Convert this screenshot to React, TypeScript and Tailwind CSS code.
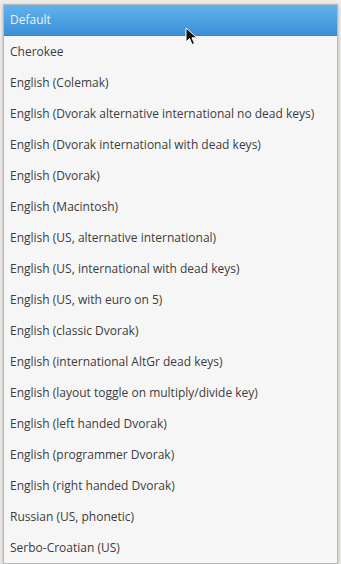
const LAYOUTS = [
  "Default",
  "Cherokee",
  "English (Colemak)",
  "English (Dvorak alternative international no dead keys)",
  "English (Dvorak international with dead keys)",
  "English (Dvorak)",
  "English (Macintosh)",
  "English (US, alternative international)",
  "English (US, international with dead keys)",
  "English (US, with euro on 5)",
  "English (classic Dvorak)",
  "English (international AltGr dead keys)",
  "English (layout toggle on multiply/divide key)",
  "English (left handed Dvorak)",
  "English (programmer Dvorak)",
  "English (right handed Dvorak)",
  "Russian (US, phonetic)",
  "Serbo-Croatian (US)",
];

function Cursor() {
  return (
    <svg width="14" height="20" viewBox="0 0 14 20" className="absolute left-[185px] top-[27px]">
      <path d="M1 1 L1 15 L4.5 11.5 L7 17.5 L9.5 16.5 L7 10.8 L12 10.8 Z" fill="#111" stroke="#fff" strokeWidth="1" strokeLinejoin="round" />
    </svg>
  );
}

export default function App() {
  return (
    <div className="relative w-[341px] h-[564px] overflow-hidden bg-[#ecebe8] font-['Open_Sans',sans-serif]">
      <div className="absolute left-[3px] top-[4px] w-[335px] border border-[#b9b9b9] bg-[#f6f6f6] shadow-[0_1px_3px_rgba(0,0,0,0.25)]">
        {LAYOUTS.map((name, i) => (
          <div
            key={name}
            className={
              i === 0
                ? "h-[31px] flex items-center pl-[6px] text-[12px] whitespace-nowrap text-[#eaf3fc] bg-gradient-to-b from-[#62b2ec] to-[#3c8fd8] border-b border-[#3a84c9]"
                : "h-[31px] flex items-center pl-[6px] text-[12px] whitespace-nowrap text-[#3c3c3c]"
            }
          >
            {name}
          </div>
        ))}
      </div>
      <Cursor />
    </div>
  );
}
